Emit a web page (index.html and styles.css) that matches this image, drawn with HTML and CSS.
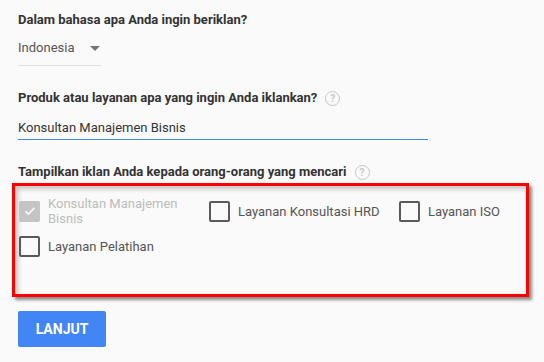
FILE: index.html
```html
<!DOCTYPE html>
<html lang="id">
<head>
    <meta charset="UTF-8">
    <title>Iklan</title>
    <link rel="stylesheet" href="styles.css">
</head>
<body>
    <div class="form">
        <div class="field-title">Dalam bahasa apa Anda ingin beriklan?</div>
        <div class="select">
            <span>Indonesia</span>
            <span class="arrow"></span>
        </div>

        <div class="field-title">Produk atau layanan apa yang ingin Anda iklankan? <span class="help">?</span></div>
        <div class="text-input">Konsultan Manajemen Bisnis</div>

        <div class="field-title">Tampilkan iklan Anda kepada orang-orang yang mencari <span class="help">?</span></div>
        <div class="highlight">
            <div class="checks">
                <label class="check disabled">
                    <span class="box checked">
                        <svg width="14" height="14" viewBox="0 0 14 14"><path d="M2.5 7.2l3 3 6-6.4" fill="none" stroke="#fff" stroke-width="1.6"/></svg>
                    </span>
                    <span class="text wrap">Konsultan Manajemen Bisnis</span>
                </label>
                <label class="check"><span class="box"></span><span class="text">Layanan Konsultasi HRD</span></label>
                <label class="check"><span class="box"></span><span class="text">Layanan ISO</span></label>
                <label class="check"><span class="box"></span><span class="text">Layanan Pelatihan</span></label>
            </div>
        </div>

        <button class="next-button">LANJUT</button>
    </div>
</body>
</html>
```

FILE: styles.css
```css
body {
    margin: 0;
    padding: 0;
    background-color: #fafafa;
    font-family: Roboto, "Liberation Sans", Arial, sans-serif;
    color: #333;
}
.form {
    padding: 10px 18px;
}
.field-title {
    font-size: 13px;
    font-weight: bold;
    line-height: 20px;
    margin-top: 22px;
    color: #333;
    display: flex;
    align-items: center;
    gap: 8px;
}
.field-title:first-child {
    margin-top: 0;
}
.help {
    width: 13px;
    height: 13px;
    border: 1.5px solid #c8c8c8;
    border-radius: 50%;
    color: #c8c8c8;
    font-size: 10px;
    line-height: 13px;
    text-align: center;
    font-weight: bold;
}
.select {
    width: 83px;
    margin-top: 8px;
    padding-bottom: 7px;
    border-bottom: 1px solid #e0e0e0;
    font-size: 13px;
    line-height: 20px;
    color: #555;
    display: flex;
    align-items: center;
    justify-content: space-between;
}
.arrow {
    width: 0;
    height: 0;
    border-left: 5px solid transparent;
    border-right: 5px solid transparent;
    border-top: 5px solid #757575;
    margin-right: 1px;
}
.text-input {
    width: 410px;
    margin-top: 10px;
    padding-bottom: 1px;
    border-bottom: 1px solid #4285f4;
    font-size: 13px;
    line-height: 20px;
    color: #333;
}
.highlight {
    margin: 1px 0 0 -6px;
    width: 507px;
    height: 98px;
    padding: 10px 0 0 4px;
    border: 3px solid #ff0000;
    box-shadow: 3px 3px 3px rgba(0, 0, 0, 0.45), inset 3px 3px 5px rgba(0, 0, 0, 0.22);
}
.checks {
    display: grid;
    grid-template-columns: 190px 190px auto;
    row-gap: 10px;
}
.check {
    display: flex;
    align-items: center;
    gap: 8px;
    font-size: 13px;
    line-height: 15px;
    color: #555;
}
.box {
    width: 21px;
    height: 21px;
    box-sizing: border-box;
    border: 2px solid #5a5a5a;
    border-radius: 2px;
    flex-shrink: 0;
    display: flex;
    align-items: center;
    justify-content: center;
}
.box.checked {
    background: #c4c4c4;
    border-color: #c4c4c4;
}
.disabled {
    color: #bdbdbd;
}
.wrap {
    max-width: 140px;
}
.next-button {
    display: block;
    margin-top: 14px;
    width: 88px;
    height: 36px;
    background: #4285f4;
    color: white;
    border: none;
    border-radius: 2px;
    font-family: Roboto, "Liberation Sans", Arial, sans-serif;
    font-size: 14px;
    font-weight: bold;
}
```
